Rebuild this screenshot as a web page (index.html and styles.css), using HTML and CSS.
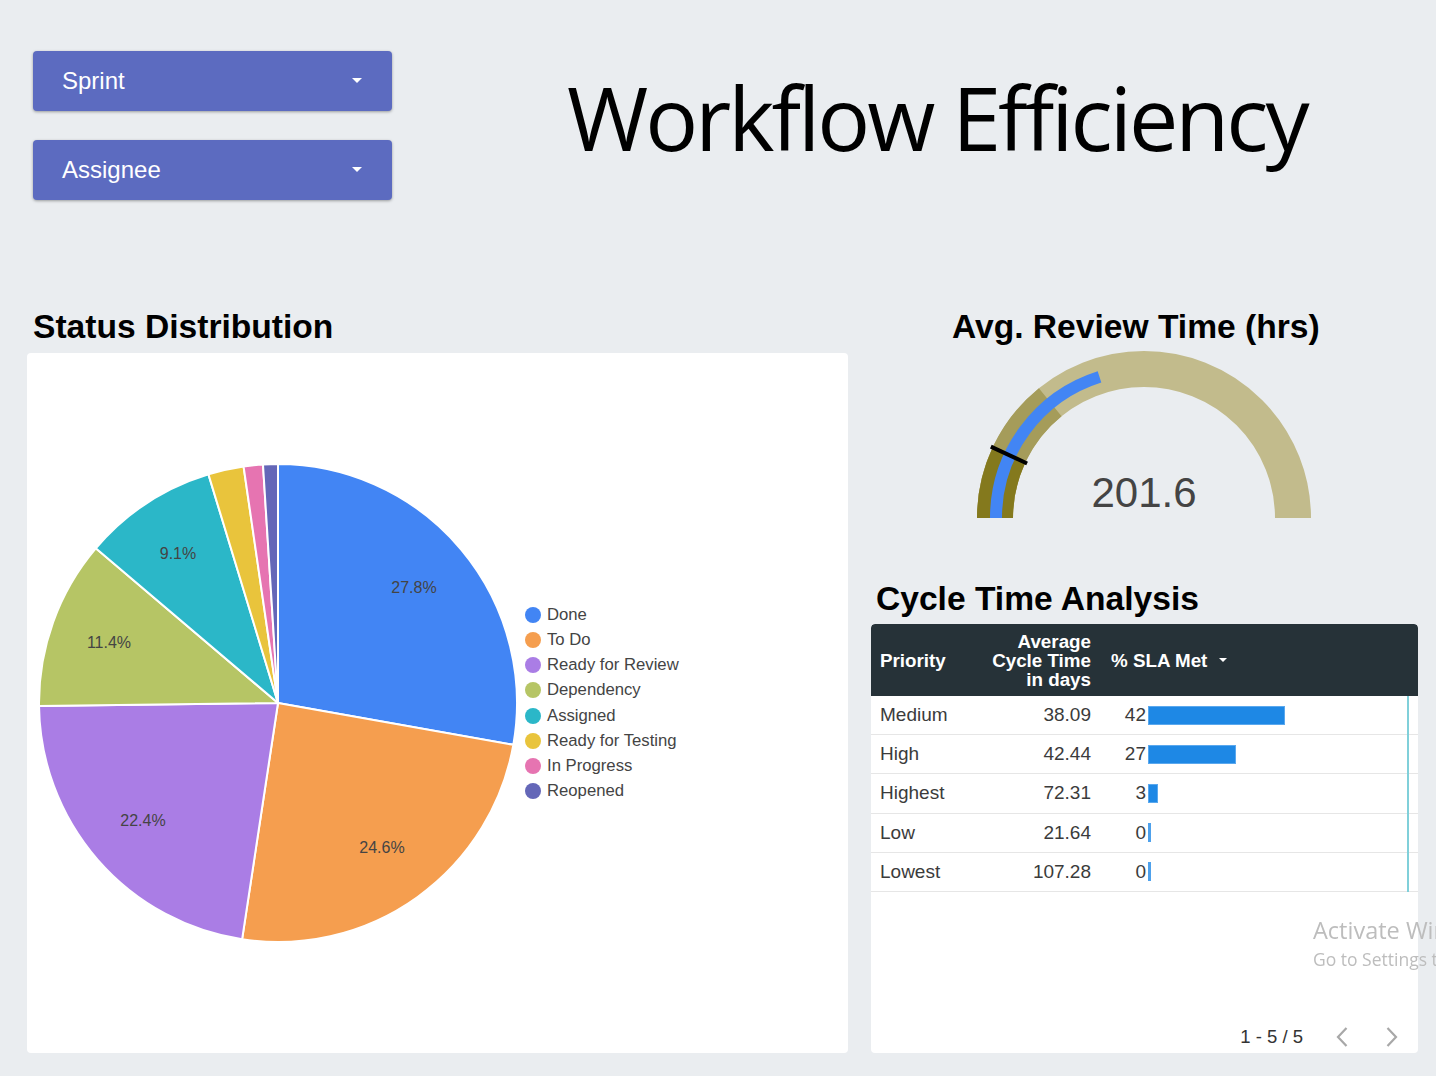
FILE: index.html
```html
<!DOCTYPE html>
<html lang="en">
<head>
<meta charset="utf-8">
<title>Workflow Efficiency</title>
<link rel="stylesheet" href="styles.css">
</head>
<body>
<div class="page">
  <header class="top">
    <div class="filters">
      <div class="select"><span>Sprint</span><span class="caret"></span></div>
      <div class="select"><span>Assignee</span><span class="caret"></span></div>
    </div>
    <h1 class="title">Workflow Efficiency</h1>
  </header>

  <main class="main">
    <section class="col-left">
      <h2 class="heading heading-status">Status Distribution</h2>
      <div class="card pie-card">
        <svg class="pie" width="490" height="490" viewBox="0 0 490 490">
          <g stroke="#fff" stroke-width="2" stroke-linejoin="round">
            <path fill="#4285f4" d="M245 245 L245 6 A239 239 0 0 1 480.31 286.83 Z"/>
            <path fill="#f59e4f" d="M245 245 L480.31 286.83 A239 239 0 0 1 209.10 481.29 Z"/>
            <path fill="#aa7de5" d="M245 245 L209.10 481.29 A239 239 0 0 1 6.02 248.00 Z"/>
            <path fill="#b6c565" d="M245 245 L6.02 248.00 A239 239 0 0 1 62.78 90.35 Z"/>
            <path fill="#2bb7c8" d="M245 245 L62.78 90.35 A239 239 0 0 1 175.45 16.34 Z"/>
            <path fill="#e9c43c" d="M245 245 L175.45 16.34 A239 239 0 0 1 210.58 8.49 Z"/>
            <path fill="#e674b1" d="M245 245 L210.58 8.49 A239 239 0 0 1 229.99 6.47 Z"/>
            <path fill="#6467b8" d="M245 245 L229.99 6.47 A239 239 0 0 1 245 6 Z"/>
          </g>
          <g class="pie-labels" text-anchor="middle">
            <text x="381" y="135">27.8%</text>
            <text x="349" y="395">24.6%</text>
            <text x="110" y="368">22.4%</text>
            <text x="76" y="190">11.4%</text>
            <text x="145" y="101">9.1%</text>
          </g>
        </svg>
        <ul class="legend">
          <li><span class="dot dot-done"></span>Done</li>
          <li><span class="dot dot-todo"></span>To Do</li>
          <li><span class="dot dot-review"></span>Ready for Review</li>
          <li><span class="dot dot-dep"></span>Dependency</li>
          <li><span class="dot dot-assigned"></span>Assigned</li>
          <li><span class="dot dot-testing"></span>Ready for Testing</li>
          <li><span class="dot dot-progress"></span>In Progress</li>
          <li><span class="dot dot-reopened"></span>Reopened</li>
        </ul>
      </div>
    </section>

    <section class="col-right">
      <h2 class="heading heading-gauge">Avg. Review Time (hrs)</h2>
      <svg class="gauge" width="547" height="180" viewBox="0 0 547 180">
        <g fill="none">
          <path d="M124 173 A149 149 0 0 1 422 173" stroke="#c2bb8c" stroke-width="36"/>
          <path d="M124 173 A149 149 0 0 1 179.23 57.21" stroke="#a59c5a" stroke-width="36"/>
          <path d="M124 173 A149 149 0 0 1 137.96 110.03" stroke="#84791d" stroke-width="36"/>
          <path d="M125 173 A148 148 0 0 1 228.50 31.85" stroke="#4285f4" stroke-width="12"/>
          <line x1="156.09" y1="118.48" x2="119.84" y2="101.58" stroke="#000" stroke-width="4"/>
        </g>
        <text class="gauge-value" x="273" y="162" text-anchor="middle">201.6</text>
      </svg>

      <h2 class="heading heading-cycle">Cycle Time Analysis</h2>
      <div class="card table-card">
        <div class="thead">
          <div class="c1">Priority</div>
          <div class="c2">Average<br>Cycle Time<br>in days</div>
          <div class="c3 th-sla">% SLA Met <span class="caret caret-sm"></span></div>
        </div>
        <div class="tbody">
          <div class="tr">
            <div class="c1">Medium</div><div class="c2">38.09</div>
            <div class="c3"><span class="num">42</span><span class="bar" style="width:137px"></span></div>
          </div>
          <div class="tr">
            <div class="c1">High</div><div class="c2">42.44</div>
            <div class="c3"><span class="num">27</span><span class="bar" style="width:88px"></span></div>
          </div>
          <div class="tr">
            <div class="c1">Highest</div><div class="c2">72.31</div>
            <div class="c3"><span class="num">3</span><span class="bar" style="width:10px"></span></div>
          </div>
          <div class="tr">
            <div class="c1">Low</div><div class="c2">21.64</div>
            <div class="c3"><span class="num">0</span><span class="bar bar-zero" style="width:3px"></span></div>
          </div>
          <div class="tr">
            <div class="c1">Lowest</div><div class="c2">107.28</div>
            <div class="c3"><span class="num">0</span><span class="bar bar-zero" style="width:3px"></span></div>
          </div>
        </div>
        <div class="pager">
          <span class="pager-text">1 - 5 / 5</span>
          <svg class="chev chev-prev" width="12" height="20" viewBox="0 0 12 20"><polyline points="10.5,1 2,10 10.5,19" fill="none" stroke="#a8a8a8" stroke-width="2.2"/></svg>
          <svg class="chev chev-next" width="12" height="20" viewBox="0 0 12 20"><polyline points="1.5,1 10,10 1.5,19" fill="none" stroke="#a8a8a8" stroke-width="2.2"/></svg>
        </div>
      </div>
    </section>
  </main>
</div>

<div class="watermark">
  <div class="wm-1">Activate Windows</div>
  <div class="wm-2">Go to Settings to activate Windows.</div>
</div>
</body>
</html>
```

FILE: styles.css
```css
* { box-sizing: border-box; }

html, body {
  margin: 0;
  padding: 0;
}

body {
  width: 1436px;
  height: 1076px;
  overflow: hidden;
  background: #eaedf0;
  font-family: "Liberation Sans", Arial, sans-serif;
  color: #000;
}

.top {
  display: flex;
  align-items: flex-start;
  height: 307px;
  padding-top: 51px;
}

.filters {
  margin-left: 33px;
  width: 359px;
  display: flex;
  flex-direction: column;
  gap: 29px;
}

.select {
  height: 60px;
  background: #5c6bc0;
  border-radius: 4px;
  box-shadow: 0 1px 3px rgba(0, 0, 0, 0.35);
  display: flex;
  align-items: center;
  justify-content: space-between;
  padding: 0 30px 1px 29px;
  color: #fff;
  font-size: 24px;
}

.caret {
  width: 0;
  height: 0;
  border-left: 5px solid transparent;
  border-right: 5px solid transparent;
  border-top: 5px solid #fff;
}

.caret-sm {
  border-left-width: 4px;
  border-right-width: 4px;
  border-top-width: 4px;
}

.title {
  margin: 22px 0 0 175px;
  font-family: "Open Sans", "Noto Sans", sans-serif;
  font-weight: 400;
  font-size: 88px;
  line-height: 88px;
  letter-spacing: -3px;
  white-space: nowrap;
}

.main {
  display: grid;
  grid-template-columns: 821px 547px;
  column-gap: 23px;
  margin-left: 27px;
}

.heading {
  margin: 0;
  font-size: 33.6px;
  font-weight: 700;
  line-height: 38px;
  padding-top: 1px;
  height: 38px;
  color: #000;
  white-space: nowrap;
}

.heading-status { padding-left: 6px; }
.heading-gauge { padding-left: 81px; }
.heading-cycle { margin-top: 54px; padding-left: 5px; }

.card {
  background: #fff;
  border-radius: 4px;
}

.pie-card {
  margin-top: 8px;
  height: 700px;
  display: flex;
  align-items: center;
  padding-left: 6px;
}

.pie { display: block; flex: none; }

.pie-labels text {
  font-family: "Liberation Sans", Arial, sans-serif;
  font-size: 16px;
  fill: #444;
}

.legend {
  list-style: none;
  margin: 0 0 0 2px;
  padding: 0;
  font-size: 16.7px;
  color: #444;
}

.legend li {
  display: flex;
  align-items: center;
  gap: 6px;
  height: 25.1px;
  white-space: nowrap;
}

.dot {
  width: 16px;
  height: 16px;
  border-radius: 50%;
  flex: none;
}
.dot-done { background: #4285f4; }
.dot-todo { background: #f59e4f; }
.dot-review { background: #aa7de5; }
.dot-dep { background: #b6c565; }
.dot-assigned { background: #2bb7c8; }
.dot-testing { background: #e9c43c; }
.dot-progress { background: #e674b1; }
.dot-reopened { background: #6467b8; }

.gauge { display: block; }

.gauge-value {
  font-family: "Liberation Sans", Arial, sans-serif;
  font-size: 42px;
  fill: #444;
}

.table-card {
  margin-top: 7px;
  height: 429px;
  display: flex;
  flex-direction: column;
  overflow: hidden;
}

.thead,
.tr {
  display: grid;
  grid-template-columns: 110px 110px 1fr;
  align-items: center;
}

.thead {
  height: 72px;
  flex: none;
  background: #263238;
  color: #fff;
  font-weight: 700;
  font-size: 18.8px;
  line-height: 19px;
  border-radius: 4px 4px 0 0;
}

.c1 { padding-left: 9px; }
.c2 { text-align: right; }
.c3 {
  display: flex;
  align-items: center;
  padding-left: 20px;
}

.th-sla { gap: 12px; white-space: nowrap; }

.tbody { position: relative; }

.tbody::after {
  content: "";
  position: absolute;
  top: 0;
  bottom: 0;
  right: 9px;
  width: 2px;
  background: #80d0da;
}

.tr {
  height: 39.2px;
  border-bottom: 1px solid #e6e6e6;
  font-size: 19px;
  color: #3b3b3b;
}

.num {
  width: 35px;
  text-align: right;
  flex: none;
}

.bar {
  display: block;
  height: 19px;
  margin-left: 2px;
  background: #1e88e5;
  border: 1px solid #5aa8ee;
}

.bar-zero {
  background: #4ea1ec;
  border: none;
}

.pager {
  margin-top: auto;
  height: 32px;
  flex: none;
  display: flex;
  align-items: center;
  justify-content: flex-end;
  padding-right: 20px;
  font-size: 18.5px;
  color: #333;
}

.chev { display: block; flex: none; }
.chev-prev { margin-left: 33px; }
.chev-next { margin-left: 38px; }

.watermark {
  position: fixed;
  left: 1313px;
  top: 914px;
  font-family: "Open Sans", "Noto Sans", sans-serif;
  color: #bdbdbd;
  white-space: nowrap;
}

.wm-1 { font-size: 23.5px; line-height: 32px; }
.wm-2 { font-size: 17.5px; line-height: 26px; }
```
